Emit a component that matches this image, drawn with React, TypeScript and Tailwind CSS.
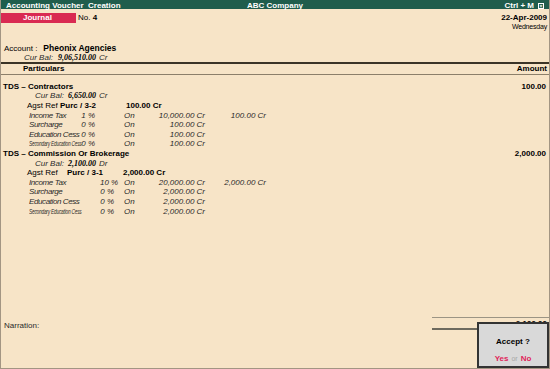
import React from 'react';

const sans = "font-['Liberation_Sans',Arial,sans-serif]";
const serif = "font-['Liberation_Serif','Times_New_Roman',serif]";

interface TaxRowProps {
  label: string;
  pct: string;
  base: string;
  tax?: string;
  wide?: boolean;
  small?: boolean;
}

function TaxRow({ label, pct, base, tax, wide, small }: TaxRowProps) {
  return (
    <div className="flex items-center h-[9.6px] pl-[28px] italic text-[8px] text-[#2a2a2a] whitespace-nowrap">
      <div className="w-[95px]">
        <div className={`flex items-center ${wide ? 'w-[85px]' : 'w-[66px]'}`}>
          <span className="flex-1 min-w-0">
            {small ? (
              <span className="inline-block text-[7px] tracking-[-0.3px] origin-left scale-x-[0.68]">{label}</span>
            ) : (
              <span className="tracking-[-0.4px]">{label}</span>
            )}
          </span>
          <span className="w-[14px] shrink-0 text-right">{pct}</span>
        </div>
      </div>
      <span className="w-[20px]">On</span>
      <span className="w-[61px] text-right">{base}</span>
      {tax && <span className="w-[61px] text-right">{tax}</span>}
    </div>
  );
}

interface LedgerProps {
  name: string;
  amount: string;
  curBal: string;
  curSide: string;
  refName: string;
  refAmount: string;
  wide?: boolean;
  taxes: { label: string; pct: string; base: string; tax?: string; small?: boolean }[];
}

function Ledger({ name, amount, curBal, curSide, refName, refAmount, wide, taxes }: LedgerProps) {
  return (
    <div>
      <div className="flex items-center justify-between h-[9.6px] pl-[2px] pr-[3px] font-bold text-[8px]">
        <span>{name}</span>
        <span>{amount}</span>
      </div>
      <div className="flex items-center h-[9.6px] pl-[34px] text-[8px] text-[#2a2a2a]">
        <span className="italic">Cur Bal:</span>
        <span className={`${serif} italic font-bold ml-[4px] text-black`}>{curBal}</span>
        <span className="italic ml-[3px]">{curSide}</span>
      </div>
      <div className="flex items-center h-[9.6px] pl-[26px] text-[8px] whitespace-nowrap">
        <span className={wide ? 'w-[40px]' : 'w-[33px]'}>Agst Ref</span>
        <span className={`font-bold ${wide ? 'w-[56px]' : 'w-[66px]'}`}>{refName}</span>
        <span className="font-bold">{refAmount}</span>
      </div>
      {taxes.map(t => (
        <TaxRow key={t.label} {...t} wide={wide} />
      ))}
    </div>
  );
}

export default function App() {
  return (
    <div className={`${sans} relative w-[550px] h-[369px] overflow-hidden bg-[#f7e4c7] text-black border-l border-r border-b border-[#a39583]`}>
      <div className="grid grid-cols-[1fr_auto_1fr] items-center h-[9px] bg-[#1f5d4c] text-white font-bold text-[8px] px-[5px]">
        <span>Accounting Voucher&nbsp; Creation</span>
        <span>ABC Company</span>
        <div className="flex items-center justify-end gap-[4px]">
          <span>Ctrl + M</span>
          <span className="w-[6px] h-[6px] border border-white text-[5px] leading-none flex items-center justify-center">×</span>
        </div>
      </div>

      <div className="flex justify-between mt-[4px]">
        <div className="flex items-center h-[10px]">
          <div className="w-[75px] h-[10px] bg-[#d92a52] text-white font-bold text-[8px] pl-[22px] flex items-center">Journal</div>
          <span className="ml-[2px] text-[8px]">No. <b>4</b></span>
        </div>
        <div className="flex flex-col items-end pr-[2px] text-[8px]">
          <span className="h-[10px] flex items-center font-bold">22-Apr-2009</span>
          <span className="h-[9px] flex items-center text-[7px] tracking-[-0.2px]">Wednesday</span>
        </div>
      </div>

      <div className="mt-[12px] flex items-center h-[9px] pl-[3px] text-[8px]">
        <span>Account :</span>
        <span className="ml-[6px] font-bold text-[8.5px]">Pheonix Agencies</span>
      </div>
      <div className="flex items-center h-[9px] pl-[23px] text-[8px] text-[#2a2a2a]">
        <span className="italic">Cur Bal:</span>
        <span className={`${serif} italic font-bold ml-[5px] text-black`}>9,06,510.00</span>
        <span className="italic ml-[3px]">Cr</span>
      </div>

      <div className="flex items-center justify-between h-[13px] border-t-2 border-b border-t-[#3b3427] border-b-[#8c7f6a] pl-[22px] pr-[2px] font-bold text-[8px]">
        <span>Particulars</span>
        <span>Amount</span>
      </div>

      <div className="pt-[7px]">
        <Ledger
          name="TDS – Contractors"
          amount="100.00"
          curBal="6,650.00"
          curSide="Cr"
          refName="Purc / 3-2"
          refAmount="100.00 Cr"
          taxes={[
            { label: 'Income Tax', pct: '1 %', base: '10,000.00 Cr', tax: '100.00 Cr' },
            { label: 'Surcharge', pct: '0 %', base: '100.00 Cr' },
            { label: 'Education Cess', pct: '0 %', base: '100.00 Cr' },
            { label: 'Secondary Education Cess', pct: '0 %', base: '100.00 Cr', small: true },
          ]}
        />
        <Ledger
          name="TDS – Commission Or Brokerage"
          amount="2,000.00"
          curBal="2,100.00"
          curSide="Dr"
          refName="Purc / 3-1"
          refAmount="2,000.00 Cr"
          wide
          taxes={[
            { label: 'Income Tax', pct: '10 %', base: '20,000.00 Cr', tax: '2,000.00 Cr' },
            { label: 'Surcharge', pct: '0 %', base: '2,000.00 Cr' },
            { label: 'Education Cess', pct: '0 %', base: '2,000.00 Cr' },
            { label: 'Secondary Education Cess', pct: '0 %', base: '2,000.00 Cr', small: true },
          ]}
        />
      </div>

      <div className="absolute left-0 right-0 top-[317px] flex justify-between">
        <span className="mt-[3px] pl-[3px] text-[8px] text-[#2a2a2a]">Narration:</span>
        <div className="w-[117px]">
          <div className="h-[2px] border-t border-[#9c9484]"></div>
          <div className="h-[9px] flex items-center justify-end pr-[2px] font-bold text-[8px]">2,100.00</div>
          <div className="h-[2px] bg-[#6e6a5e]"></div>
        </div>
      </div>

      <div className="absolute right-0 bottom-0 w-[72px] h-[46px] bg-[#d9d9d9] border-2 border-[#333333] flex flex-col items-center justify-between pt-[12px] pb-[1px]">
        <span className="font-bold text-[8px]">Accept ?</span>
        <span className="text-[8px] font-bold">
          <span className="text-[#e0245a]">Yes</span>
          <span className="text-[#a8a8a8] font-normal text-[7px] mx-[3px]">or</span>
          <span className="text-[#e0245a]">No</span>
        </span>
      </div>
    </div>
  );
}
